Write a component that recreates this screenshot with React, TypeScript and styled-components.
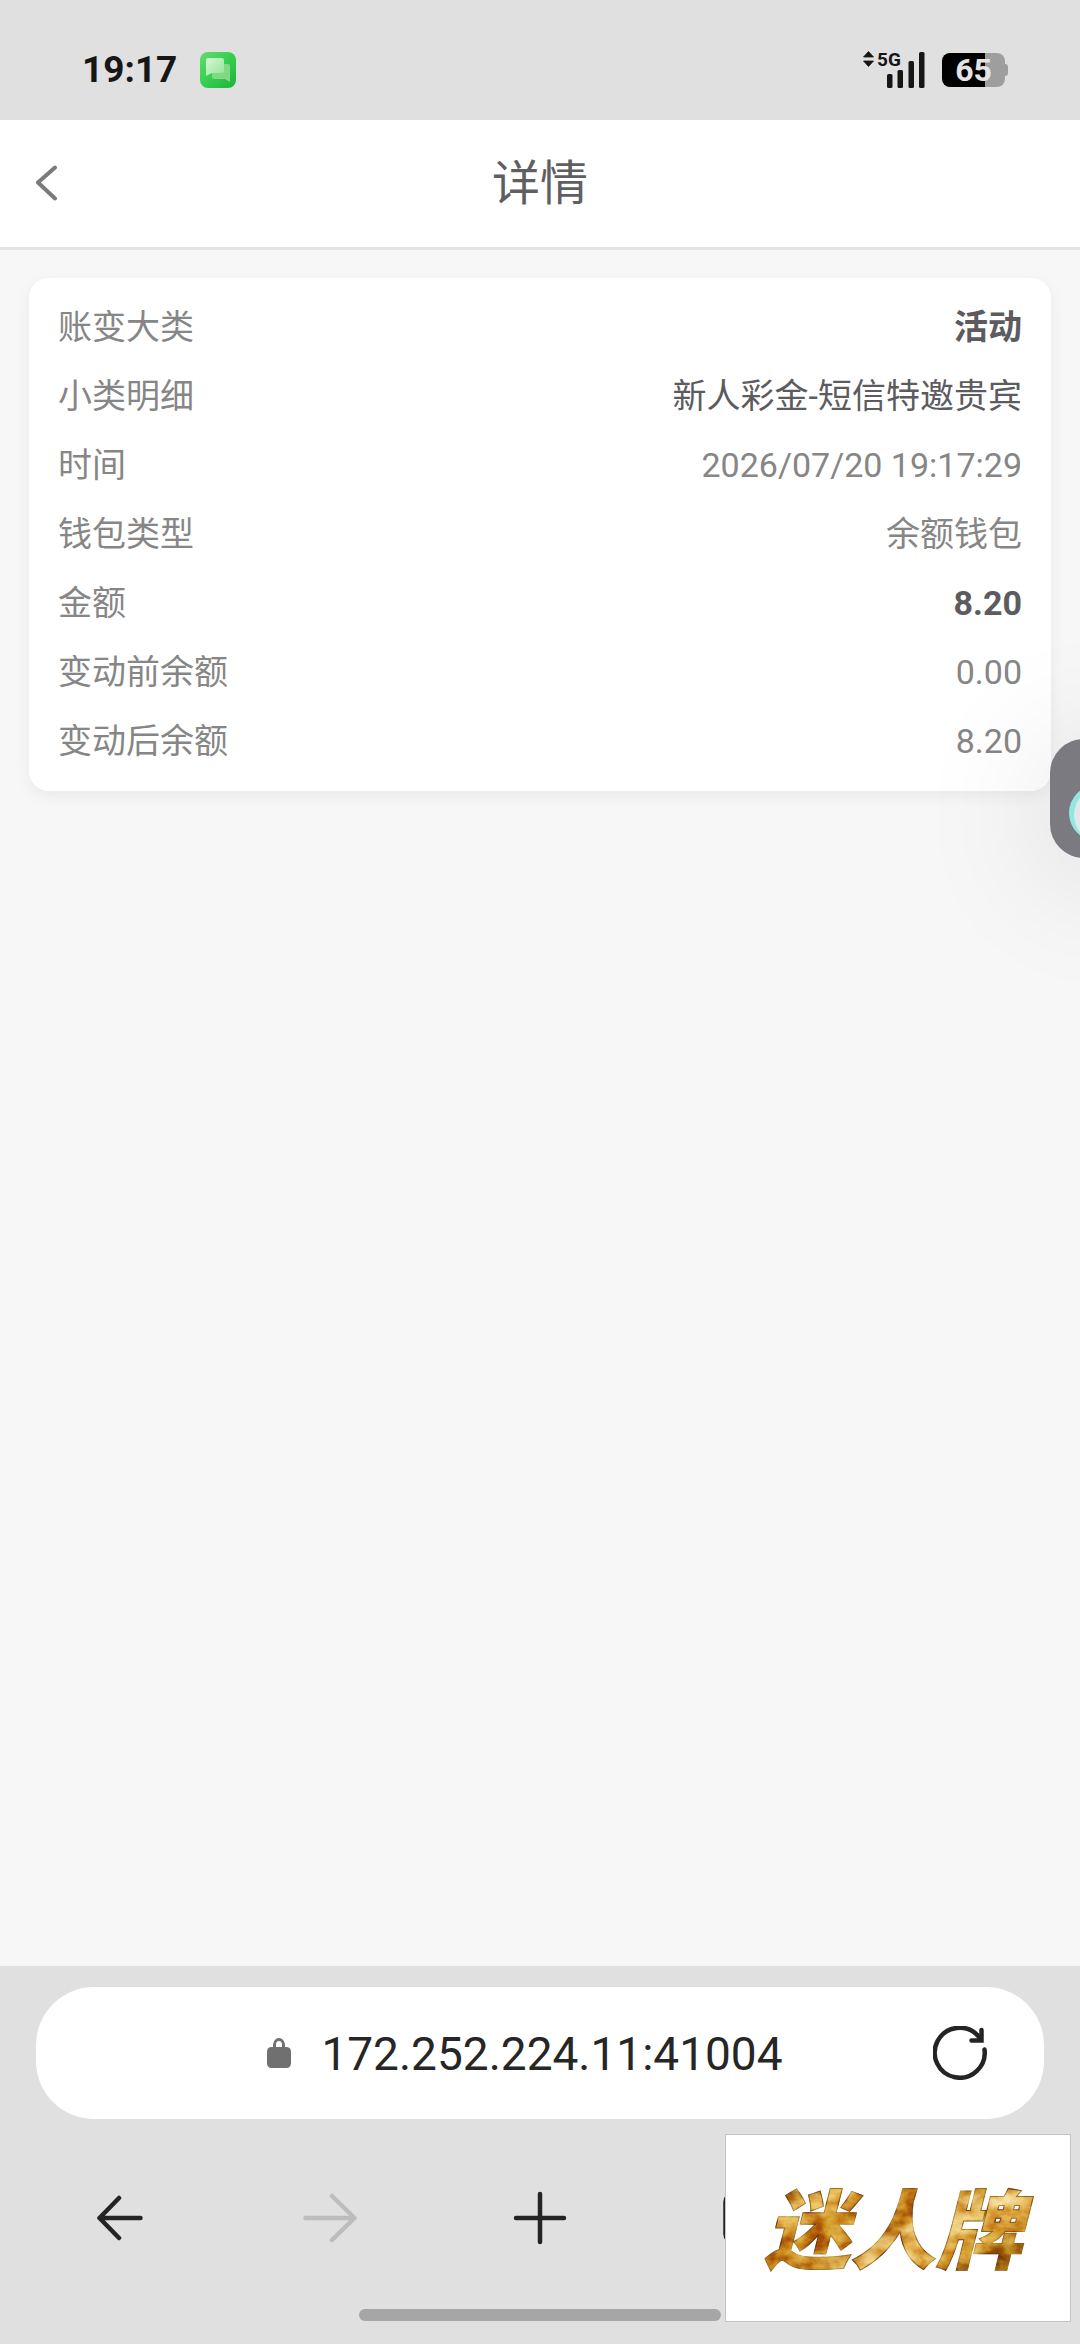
import React from "react";
import styled, { createGlobalStyle } from "styled-components";

const GlobalStyle = createGlobalStyle`
  *, *::before, *::after { box-sizing: border-box; }
  body {
    margin: 0;
    background: #f7f7f7;
    font-family: Roboto, "Noto Sans CJK SC", sans-serif;
  }
  button, input { font: inherit; color: inherit; border: 0; padding: 0; background: none; }
  svg { display: block; }
`;

const Screen = styled.div`
  position: relative;
  display: flex;
  flex-direction: column;
  min-height: 100vh;
  overflow: hidden;
`;

const StatusBar = styled.div`
  display: flex;
  align-items: center;
  justify-content: space-between;
  height: 120px;
  padding: 20px 72px 0 82px;
  background: #e0e0e0;
  color: #161616;
`;

const StatusGroup = styled.div<{ $gap: number }>`
  display: flex;
  align-items: center;
  gap: ${(p) => p.$gap}px;
`;

const Clock = styled.time`
  font-size: 37px;
  line-height: 44px;
  font-weight: 700;
`;

const Battery = styled.div`
  display: flex;
  align-items: center;
`;

const BatteryBody = styled.div`
  width: 63px;
  height: 34px;
  border-radius: 8px;
  background: linear-gradient(90deg, #000 68%, #9e9e9e 68%);
  color: #e4e4e4;
  font-size: 32px;
  line-height: 34px;
  font-weight: 700;
  text-align: center;
`;

const BatteryTip = styled.div`
  width: 3px;
  height: 12px;
  border-radius: 0 3px 3px 0;
  background: #9e9e9e;
`;

const Header = styled.header`
  display: grid;
  grid-template-columns: 96px 1fr 96px;
  align-items: center;
  height: 130px;
  border-bottom: 3px solid #e3e3e3;
  background: #fff;
`;

const BackButton = styled.button`
  display: flex;
  align-items: center;
  height: 96px;
  padding-left: 34px;
`;

const Title = styled.h1`
  margin: 0;
  color: #5f5f63;
  font-size: 48px;
  line-height: 72px;
  font-weight: 400;
  text-align: center;
`;

const Main = styled.main`
  flex: 1;
  padding: 28px 29px;
`;

const Card = styled.dl`
  margin: 0;
  padding: 15px 29px;
  border-radius: 20px;
  background: #fff;
  box-shadow: 0 5px 16px rgba(0, 0, 0, 0.06);
  font-size: 34px;
  line-height: 69px;
`;

const Row = styled.div`
  display: flex;
  justify-content: space-between;
`;

const Label = styled.dt`
  color: #868686;
`;

type Tone = "muted" | "dark" | "strong";

const Value = styled.dd<{ $tone: Tone }>`
  margin: 0;
  color: ${(p) => (p.$tone === "muted" ? "#868686" : "#5b5b60")};
  font-weight: ${(p) => (p.$tone === "strong" ? 700 : 400)};
`;

const Floating = styled.button`
  position: absolute;
  top: 739px;
  right: -89px;
  width: 119px;
  height: 119px;
  border-radius: 34px;
  background: #7b7a80;
  box-shadow: 0 14px 140px rgba(0, 0, 0, 0.14);
`;

const BrowserBar = styled.footer`
  display: flex;
  flex-direction: column;
  padding: 21px 0 23px;
  background: #e0e0e0;
`;

const AddressBar = styled.div`
  display: flex;
  align-items: center;
  height: 132px;
  margin: 0 36px;
  padding: 0 57px 0 81px;
  border-radius: 58px;
  background: #fff;
`;

const AddressField = styled.label`
  display: flex;
  flex: 1;
  align-items: center;
  justify-content: center;
  gap: 30px;
`;

const AddressInput = styled.input`
  field-sizing: content;
  padding-top: 2px;
  color: #262626;
  font-size: 46px;
  line-height: 60px;
  outline: none;
`;

const Nav = styled.nav`
  display: grid;
  grid-template-columns: repeat(5, 1fr);
  height: 190px;
  padding: 0 15px;
`;

const NavButton = styled.button`
  display: flex;
  align-items: center;
  justify-content: center;
  padding-top: 7px;
  color: #242424;

  &:disabled { color: #bdbdbd; }
`;

const HomeIndicator = styled.div`
  width: 362px;
  height: 12px;
  margin: 0 auto;
  border-radius: 6px;
  background: #a6a6a6;
`;

const LogoPlate = styled.div`
  position: absolute;
  right: 9px;
  bottom: 22px;
  width: 346px;
  height: 188px;
  border: 1px solid #c4c4c4;
  background: #fff;
`;

const rows: { label: string; value: string; tone: Tone }[] = [
  { label: "账变大类", value: "活动", tone: "strong" },
  { label: "小类明细", value: "新人彩金-短信特邀贵宾", tone: "dark" },
  { label: "时间", value: "2026/07/20 19:17:29", tone: "muted" },
  { label: "钱包类型", value: "余额钱包", tone: "muted" },
  { label: "金额", value: "8.20", tone: "strong" },
  { label: "变动前余额", value: "0.00", tone: "muted" },
  { label: "变动后余额", value: "8.20", tone: "muted" },
];

const MessageIcon = () => (
  <svg width="36" height="36" viewBox="0 0 36 36">
    <defs>
      <linearGradient id="msgBg" x1="0" y1="0" x2="1" y2="1">
        <stop offset="0" stopColor="#62dc6c" />
        <stop offset="0.5" stopColor="#35cf50" />
        <stop offset="1" stopColor="#1fb13d" />
      </linearGradient>
      <linearGradient id="msgFront" x1="0" y1="0" x2="1" y2="1">
        <stop offset="0" stopColor="#d6f8d6" />
        <stop offset="1" stopColor="#8fe596" />
      </linearGradient>
    </defs>
    <rect width="36" height="36" rx="8" fill="url(#msgBg)" />
    <path d="M14 12h14a2 2 0 0 1 2 2v16l-5-3H14a2 2 0 0 1-2-2V14a2 2 0 0 1 2-2z" fill="#82d982" />
    <path d="M8 6h14a2 2 0 0 1 2 2v11a2 2 0 0 1-2 2H12l-6 3V8a2 2 0 0 1 2-2z" fill="url(#msgFront)" />
  </svg>
);

const SignalIcon = () => (
  <svg width="62" height="46" viewBox="0 -4 62 46" fill="#161616">
    <path d="M5.500 .5l5 5.500h-10zM5.500 15.500l5-5.500h-10z" stroke="#161616" strokeWidth="0.800" strokeLinejoin="round" />
    <text x="14" y="15" fontFamily="Roboto, sans-serif" fontSize="19" fontWeight="700">5G</text>
    <rect x="24" y="23" width="5.500" height="14" rx="1.500" />
    <rect x="34.500" y="19" width="5.500" height="18" rx="1.500" />
    <rect x="45.500" y="10" width="5.500" height="27" rx="1.500" />
    <rect x="56" y="1" width="5.500" height="36" rx="1.500" />
  </svg>
);

const ChevronIcon = () => (
  <svg width="26" height="38" viewBox="0 0 26 38" fill="none" stroke="#7a7a7a" strokeWidth="4" strokeLinecap="round" strokeLinejoin="round">
    <path d="M21 2.500L4 17.500L21 33.500" />
  </svg>
);

const LockIcon = () => (
  <svg width="24" height="30" viewBox="0 0 24 30">
    <path d="M7.500 12V7a4.500 5.500 0 0 1 9 0v5" fill="none" stroke="#707070" strokeWidth="3" />
    <rect y="9" width="24" height="21" rx="4.500" fill="#707070" />
  </svg>
);

const ReloadIcon = () => (
  <svg width="54" height="54" viewBox="0 0 54 54" fill="none" stroke="#242424" strokeWidth="4.500" strokeLinecap="round">
    <path d="M51.500 23.500A25 25 0 1 1 45 9.700l2 3" />
    <path d="M48.500 4v10.500H38.500" />
  </svg>
);

const BackIcon = () => (
  <svg width="46" height="46" viewBox="0 0 46 46" fill="none" stroke="currentColor" strokeWidth="4.500" strokeLinecap="round" strokeLinejoin="round">
    <path d="M43.500 23H2.500M22 3L2.500 23L22 43" />
  </svg>
);

const ForwardIcon = () => (
  <svg width="54" height="50" viewBox="0 0 54 50" fill="none" stroke="currentColor" strokeWidth="4.500" strokeLinecap="round" strokeLinejoin="round">
    <path d="M2.500 25H51.500M29 3L51.500 25L29 47" />
  </svg>
);

const PlusIcon = () => (
  <svg width="54" height="54" viewBox="0 0 54 54" fill="none" stroke="currentColor" strokeWidth="4.500" strokeLinecap="round">
    <path d="M3 27H51M27 3V51" />
  </svg>
);

const TabsIcon = () => (
  <svg width="54" height="54" viewBox="0 0 54 54" fill="none" stroke="currentColor" strokeWidth="4.500">
    <rect x="2.500" y="3" width="49" height="48" rx="8" />
  </svg>
);

const GoldLogo = () => (
  <svg width="344" height="186" viewBox="0 0 344 186">
    <defs>
      <linearGradient id="gold" x1="0" y1="0" x2="1" y2="1">
        <stop offset="0" stopColor="#a8700c" />
        <stop offset="0.14" stopColor="#b87c14" />
        <stop offset="0.26" stopColor="#eec868" />
        <stop offset="0.36" stopColor="#cd8c1c" />
        <stop offset="0.5" stopColor="#c98a20" />
        <stop offset="0.6" stopColor="#f0d080" />
        <stop offset="0.72" stopColor="#d8a030" />
        <stop offset="0.86" stopColor="#a0680c" />
        <stop offset="1" stopColor="#b87c18" />
      </linearGradient>
      <filter id="foil" x="-5%" y="-5%" width="110%" height="110%" colorInterpolationFilters="sRGB">
        <feTurbulence type="fractalNoise" baseFrequency="0.05 0.07" numOctaves="4" seed="8" result="noise" />
        <feColorMatrix in="noise" type="matrix" values="1.800 0 0 0 -0.450  1.800 0 0 0 -0.450  1.800 0 0 0 -0.450  0 0 0 0 1" result="grain" />
        <feBlend in="grain" in2="SourceGraphic" mode="soft-light" result="mix" />
        <feComposite in="mix" in2="SourceAlpha" operator="in" />
      </filter>
    </defs>
    <text
      x="38"
      y="127"
      fontFamily='"Noto Sans CJK SC", sans-serif'
      fontSize="86"
      fontWeight="900"
      fontStyle="italic"
      fill="url(#gold)"
      stroke="#a87418"
      strokeWidth="1"
      filter="url(#foil)"
    >
      迷人牌
    </text>
  </svg>
);

const AssistantIcon = () => (
  <svg width="119" height="119" viewBox="0 0 119 119">
    <circle cx="47" cy="74" r="28" fill="#90e8e0" />
    <circle cx="52" cy="76" r="28" fill="#e2e8e8" />
  </svg>
);

export default function App() {
  return (
    <>
      <GlobalStyle />
      <Screen>
        <StatusBar>
          <StatusGroup $gap={23}>
            <Clock>19:17</Clock>
            <MessageIcon />
          </StatusGroup>
          <StatusGroup $gap={17}>
            <SignalIcon />
            <Battery>
              <BatteryBody>65</BatteryBody>
              <BatteryTip />
            </Battery>
          </StatusGroup>
        </StatusBar>

        <Header>
          <BackButton type="button" aria-label="返回">
            <ChevronIcon />
          </BackButton>
          <Title>详情</Title>
        </Header>

        <Main>
          <Card>
            {rows.map((row) => (
              <Row key={row.label}>
                <Label>{row.label}</Label>
                <Value $tone={row.tone}>{row.value}</Value>
              </Row>
            ))}
          </Card>
        </Main>

        <BrowserBar>
          <AddressBar>
            <AddressField>
              <LockIcon />
              <AddressInput type="text" aria-label="网址" defaultValue="172.252.224.11:41004" />
            </AddressField>
            <button type="button" aria-label="刷新">
              <ReloadIcon />
            </button>
          </AddressBar>
          <Nav>
            <NavButton type="button" aria-label="后退"><BackIcon /></NavButton>
            <NavButton type="button" aria-label="前进" disabled><ForwardIcon /></NavButton>
            <NavButton type="button" aria-label="新建"><PlusIcon /></NavButton>
            <NavButton type="button" aria-label="标签页"><TabsIcon /></NavButton>
          </Nav>
          <HomeIndicator />
        </BrowserBar>

        <Floating type="button" aria-label="助手">
          <AssistantIcon />
        </Floating>
        <LogoPlate>
          <GoldLogo />
        </LogoPlate>
      </Screen>
    </>
  );
}
